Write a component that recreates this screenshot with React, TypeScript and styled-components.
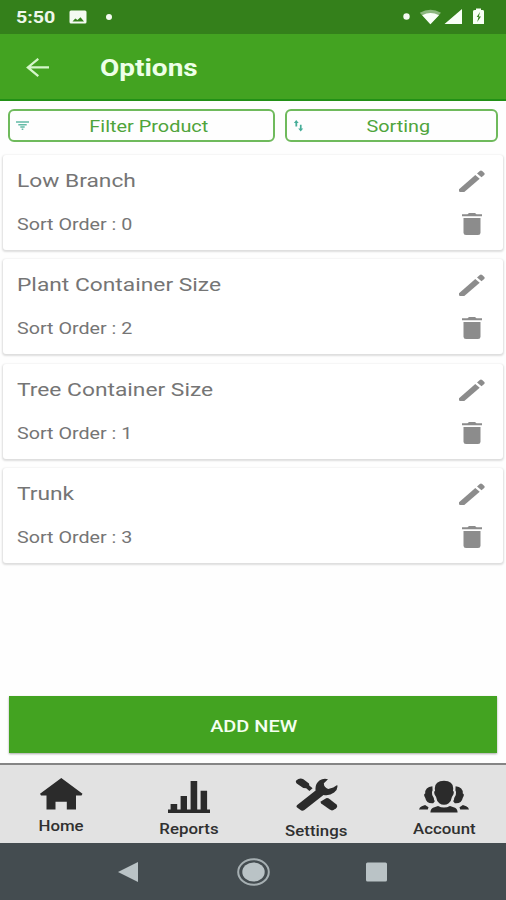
import React from "react";
import styled, { createGlobalStyle } from "styled-components";

const GlobalStyle = createGlobalStyle`
  * { box-sizing: border-box; }
  html, body { margin: 0; padding: 0; }
  body { background: #fefefe; font-family: Roboto, "Liberation Sans", sans-serif; }
  svg { display: block; flex: none; }
`;

const Screen = styled.div`
  width: 506px;
  height: 900px;
  display: flex;
  flex-direction: column;
  overflow: hidden;
  background: #fefefe;
`;

const Label = styled.span<{
  $size: number;
  $line: number;
  $weight?: number;
  $color?: string;
  $origin?: string;
  $stretch?: number;
}>`
  display: block;
  white-space: pre;
  font-size: ${(p) => p.$size}px;
  line-height: ${(p) => p.$line}px;
  font-weight: ${(p) => p.$weight ?? 400};
  color: ${(p) => p.$color ?? "#757575"};
  transform: scaleX(${(p) => p.$stretch ?? 1.187});
  transform-origin: ${(p) => p.$origin ?? "left"} center;
`;

const StatusBar = styled.div`
  height: 34px;
  flex: none;
  display: flex;
  align-items: center;
  justify-content: space-between;
  padding: 0 20px 0 16px;
  background: #34801b;
`;

const StatusGroup = styled.div`
  display: flex;
  align-items: center;
`;

const Clock = styled.div`
  width: 53px;
`;

const AppBar = styled.header`
  height: 67px;
  flex: none;
  display: flex;
  align-items: center;
  gap: 50px;
  padding: 3px 26px 0;
  background: #43a321;
  border-bottom: 2px solid #229016;
`;

const FilterRow = styled.div`
  display: flex;
  flex: none;
  gap: 10px;
  padding: 8px 8px 0;
`;

const FilterButton = styled.button<{ $width: number }>`
  width: ${(p) => p.$width}px;
  height: 33px;
  display: flex;
  align-items: center;
  padding: 0 6px;
  border: 2px solid #6fba5c;
  border-radius: 6px;
  background: #fefefe;
  font-family: inherit;
`;

const ButtonText = styled.div<{ $shift: number }>`
  flex: 1;
  display: flex;
  justify-content: center;
  padding-left: ${(p) => p.$shift}px;
`;

const CardList = styled.main`
  flex: 1;
  display: flex;
  flex-direction: column;
  gap: 9.3px;
  padding: 13px 3px 0;
`;

const Card = styled.article`
  height: 95px;
  flex: none;
  display: flex;
  justify-content: space-between;
  padding: 14px 17px 0 14px;
  border-radius: 3px;
  background: #fff;
  box-shadow: 0 1px 2px 1px rgba(0, 0, 0, 0.13);
`;

const CardText = styled.div`
  display: flex;
  flex-direction: column;
  gap: 20px;
`;

const CardActions = styled.div`
  display: flex;
  flex-direction: column;
  align-items: center;
  gap: 20px;
`;

const AddButton = styled.button`
  height: 57px;
  flex: none;
  display: flex;
  justify-content: center;
  align-items: center;
  margin: 0 9px 10px;
  padding: 2px 0 0 1px;
  border: 0;
  background: #43a321;
  font-family: inherit;
  box-shadow: 0 1px 2px rgba(0, 0, 0, 0.35);
`;

const TabBar = styled.nav`
  height: 80px;
  flex: none;
  display: grid;
  grid-template-columns: 123px 132px 123px 132px;
  border-top: 2px solid #858585;
  background: #e2e2e2;
`;

const Tab = styled.div<{ $top: number; $gap: number }>`
  display: flex;
  flex-direction: column;
  align-items: center;
  padding-top: ${(p) => p.$top}px;
  gap: ${(p) => p.$gap}px;
`;

const SystemBar = styled.div`
  height: 57px;
  flex: none;
  display: flex;
  align-items: center;
  justify-content: center;
  gap: 96px;
  background: #444c50;
`;

const options = [
  { name: "Low Branch", order: 0 },
  { name: "Plant Container Size", order: 2 },
  { name: "Tree Container Size", order: 1 },
  { name: "Trunk", order: 3 },
];

const Pencil = () => (
  <svg width="28" height="24" viewBox="0 0 28 24" fill="#8c8c8c">
    <path d="M1 20.2 17.3 6 21.7 9.8 6.3 23H2.2Q1 23 1 22z" />
    <path d="M19 4.4 21.8 2Q23 1.2 24.2 2.1L26.3 4Q27.3 5 26.2 6L23.5 8.3z" />
  </svg>
);

const Trash = () => (
  <svg width="20" height="22" viewBox="0 0 20 22" fill="#8c8c8c">
    <path d="M0 1.2H5.5L7 0H13L14.5 1.2H20V3.3H0zM1.5 5H18.5V19.7Q18.5 22 16 22H4Q1.5 22 1.5 19.7z" />
  </svg>
);

const HomeIcon = () => (
  <svg width="43" height="32" viewBox="0 0 43 32" fill="#2b2b2b">
    <path d="M21.3 0 42.5 15.8 41.5 17.5H36V31.6H26.8V23.8H15.5V31.6H6.5V17.5H1L0 15.8z" />
  </svg>
);

const ReportsIcon = () => (
  <svg width="42" height="32" viewBox="0 0 42 32" fill="#2b2b2b">
    <path d="M0 28.5H2.6V23H9.2V28.5H12.6V15H19V28.5H22.6V0H29.2V28.5H32.6V9.7H39.1V28.5H42V32H0z" />
  </svg>
);

const SettingsIcon = () => (
  <svg width="44" height="34" viewBox="0 0 44 34" fill="#2b2b2b">
    <path d="M1.2 2.6Q4.5-.6 8.4 1.2L14 5.4 14.3 7.5 17.6 10.2 14.4 13 11.2 10.3 8.3 10 1.7 5.4Q.3 4 1.2 2.6z" />
    <path d="M2.2 26.9 20.6 12.4Q19.8 6.2 24.4 2.6 28.3-.2 33 1.2L28.9 5.3Q28.6 9.2 33.2 10.9L38.3 9.4 42.2 7.1Q43.4 11.1 39.1 14.6 34.6 18.1 28.5 17L9.4 32Q7.2 33.5 5.2 31.8L2.1 29.5Q.8 28.1 2.2 26.9z" />
    <path d="M25.4 23.8 31.1 20.2Q33 19.8 34.8 21.2L41.2 26.3Q43.3 28.2 41.1 30.2L38.5 32Q36.7 33 34.7 31.6L26.2 25.6z" />
  </svg>
);

const AccountIcon = () => (
  <svg width="50" height="33" viewBox="0 0 50 33" fill="#2b2b2b">
    <path d="M15.8 8.3Q16 .8 25 .8 34 .8 34.2 8.3L34 11Q35.4 11.3 34.4 14.5L32.9 17Q32.4 21 29.7 23.2 27.6 24.8 25 24.8 22.4 24.8 20.3 23.2 17.6 21 17.1 17L15.6 14.5Q14.6 11.3 16 11z" />
    <path d="M13.4 6.3Q5.8 7.3 6.2 13.4 4 14 6.3 18 7.3 23.8 14.2 23.2L15.8 21.2Q14.8 19.7 14.8 18L13.2 15Q12.3 12 13.6 10.3z" />
    <path d="M36.6 6.3Q44.2 7.3 43.8 13.4 46 14 43.7 18 42.7 23.8 35.8 23.2L34.2 21.2Q35.2 19.7 35.2 18L36.8 15Q37.7 12 36.4 10.3z" />
    <path d="M11.4 32.5Q11.6 28.8 14 27.8L19 26Q25 29.2 31 26L36 27.8Q38.4 28.8 38.6 32.5zM0 29.6Q.5 27.1 2.8 26.2L6.1 24.9 9.5 27.3 8.8 29.6zM50 29.6Q49.5 27.1 47.2 26.2L43.9 24.9 40.5 27.3 41.2 29.6z" />
  </svg>
);

const tabs = [
  { label: "Home", top: 13, gap: 8, Icon: HomeIcon },
  { label: "Reports", top: 16, gap: 8, Icon: ReportsIcon },
  { label: "Settings", top: 13, gap: 11, Icon: SettingsIcon },
  { label: "Account", top: 15, gap: 8, Icon: AccountIcon },
];

export default function App() {
  return (
    <Screen>
      <GlobalStyle />
      <StatusBar>
        <StatusGroup>
          <Clock>
            <Label $size={17.4} $line={33} $weight={700} $color="#eef7ea" $stretch={1.13}>5:50</Label>
          </Clock>
          <svg width="46" height="15" viewBox="0 0 46 15">
            <rect x="0.5" y="0.5" width="17" height="13" rx="1.5" fill="#f4faf2" />
            <path d="M3.5 11.5 6.3 8.6 8.5 10 11.5 7.2 15 11.5z" fill="#34801b" />
            <circle cx="40" cy="7" r="3" fill="#f4faf2" />
          </svg>
        </StatusGroup>
        <svg width="84" height="18" viewBox="0 0 84 18">
          <circle cx="4.5" cy="8.5" r="3.2" fill="#f4faf2" />
          <path d="M17.8 4.8Q28.5-1.4 39 4.8L28.4 16.2z" fill="#8cb77e" />
          <path d="M20.2 7.2Q28.5 3 37 7.2L28.4 16.2zM42.5 16 60 1V16z" fill="#f8fff6" />
          <path d="M71 3.4Q71 2 73 2H74V.5H79V2H80.5Q82 2 82 3.4V16H71z" fill="#f8fff6" />
          <path d="M78 4 74.7 9H76.5L75.2 14 79 8.4H76.8z" fill="#34801b" />
        </svg>
      </StatusBar>

      <AppBar>
        <svg width="24" height="20" viewBox="0 0 24 20" fill="none" stroke="#d5f6ca" strokeWidth="2.2">
          <path d="M23 9.4H2M12.3 .8 1.8 9.4 12.3 18.2" />
        </svg>
        <Label $size={24} $line={34} $weight={700} $color="#edffe7" $stretch={1.165}>Options</Label>
      </AppBar>

      <FilterRow>
        <FilterButton $width={267}>
          <svg width="14" height="9" viewBox="0 0 14 9" fill="none" stroke="#63bba6" strokeWidth="1.4">
            <path d="M0 1H13M2.3 3.7H10.7M4.3 6H8.7M5.7 8.2H7.3" />
          </svg>
          <ButtonText $shift={1}>
            <Label $size={17} $line={30} $color="#4fa43b" $origin="center" $stretch={1.17}>Filter Product</Label>
          </ButtonText>
        </FilterButton>
        <FilterButton $width={213}>
          <svg width="12" height="12" viewBox="0 0 12 12" fill="#46ad98">
            <path d="M3.2 0 5.7 3H4.2V6.6H2.4V3H.9zM6.9 4.8H8.6V8.5H10.2L7.7 11.5 5.2 8.5H6.9z" />
          </svg>
          <ButtonText $shift={2}>
            <Label $size={17} $line={30} $color="#4fa43b" $origin="center" $stretch={1.165}>Sorting</Label>
          </ButtonText>
        </FilterButton>
      </FilterRow>

      <CardList>
        {options.map((option) => (
          <Card key={option.name}>
            <CardText>
              <Label $size={19.2} $line={24}>{option.name}</Label>
              <Label $size={16.6} $line={24}>{`Sort Order : ${option.order}`}</Label>
            </CardText>
            <CardActions>
              <Pencil />
              <Trash />
            </CardActions>
          </Card>
        ))}
      </CardList>

      <AddButton>
        <Label $size={16.8} $line={24} $weight={500} $color="#f4fff0" $origin="center">ADD NEW</Label>
      </AddButton>

      <TabBar>
        {tabs.map(({ label, top, gap, Icon }) => (
          <Tab key={label} $top={top} $gap={gap}>
            <Icon />
            <Label $size={14.2} $line={16} $weight={500} $color="#303030" $origin="center">{label}</Label>
          </Tab>
        ))}
      </TabBar>

      <SystemBar>
        <svg width="23" height="20" viewBox="0 0 23 20" fill="#bac3c6">
          <path d="M0 10 20 0V20z" />
        </svg>
        <svg width="33" height="28" viewBox="0 0 33 28">
          <ellipse cx="16.5" cy="14" rx="15.3" ry="12.8" fill="none" stroke="#a6afb2" strokeWidth="2" />
          <ellipse cx="16.5" cy="14" rx="11.2" ry="9.6" fill="#bac3c6" />
        </svg>
        <svg width="22" height="20" viewBox="0 0 22 20">
          <rect x="0" y="0.5" width="21" height="19" rx="1.5" fill="#bac3c6" />
        </svg>
      </SystemBar>
    </Screen>
  );
}
